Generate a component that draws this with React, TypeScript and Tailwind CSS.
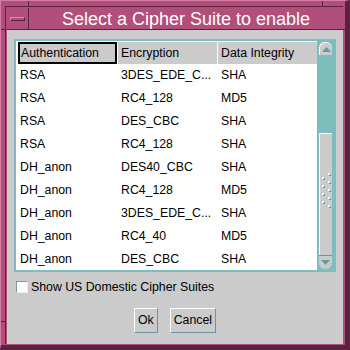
import React from "react";

const rows = [
  ["RSA", "3DES_EDE_C...", "SHA"],
  ["RSA", "RC4_128", "MD5"],
  ["RSA", "DES_CBC", "SHA"],
  ["RSA", "RC4_128", "SHA"],
  ["DH_anon", "DES40_CBC", "SHA"],
  ["DH_anon", "RC4_128", "MD5"],
  ["DH_anon", "3DES_EDE_C...", "SHA"],
  ["DH_anon", "RC4_40", "MD5"],
  ["DH_anon", "DES_CBC", "SHA"],
];

const font = { fontFamily: '"Liberation Sans", Arial, sans-serif' };

const Grip = () => (
  <svg width="9" height="36" viewBox="0 0 9 36">
    {[0, 8, 16, 24, 32].map((y) => (
      <g key={"r" + y}>
        <rect x="7" y={y + 1} width="2" height="2" fill="#5f9c9c" />
        <rect x="6" y={y} width="2" height="2" fill="#ffffff" />
      </g>
    ))}
    {[4, 12, 20, 28].map((y) => (
      <g key={"l" + y}>
        <rect x="1" y={y + 1} width="2" height="2" fill="#5f9c9c" />
        <rect x="0" y={y} width="2" height="2" fill="#ffffff" />
      </g>
    ))}
  </svg>
);

const Arrow = ({ up }: { up: boolean }) => (
  <svg width="9" height="5" viewBox="0 0 9 5">
    <polygon points={up ? "0,5 9,5 4.5,0" : "0,0 9,0 4.5,5"} fill="#5f9c9c" />
  </svg>
);

export default function App() {
  return (
    <div
      className="relative w-[350px] h-[350px] bg-[#b24e7a] border-t border-l border-[#cf7da2] border-r-[5px] border-b-[5px] border-r-[#5a2141] border-b-[#5a2141] pt-[5px] pl-[4px] pr-[2px] pb-[1px] flex"
      style={font}
    >
      {/* frame corner marks */}
      <div className="absolute left-[27px] top-0 w-px h-[5px] bg-[#5a2141]" />
      <div className="absolute right-[22px] top-0 w-px h-[5px] bg-[#5a2141]" />
      <div className="absolute left-0 top-[28px] w-[4px] h-px bg-[#5a2141]" />
      <div className="absolute right-0 top-[28px] w-[2px] h-px bg-[#5a2141]" />
      <div className="absolute left-0 bottom-[23px] w-[4px] h-px bg-[#5a2141]" />

      <div className="flex-1 flex flex-col border-t border-l border-[#5a2141] pt-px pl-px">
        {/* title bar */}
        <div className="flex h-[22px] border-b border-[#5a2141]">
          <div className="w-[22px] border-r border-[#5a2141] flex items-center justify-center">
            <div className="w-[15px] h-[4px] border-t border-l border-[#d88cad] border-b border-r border-b-[#5a2141] border-r-[#5a2141] bg-[#b24e7a]" />
          </div>
          <div className="flex-1 flex items-center justify-center text-white text-[18px] leading-none pt-px">
            Select a Cipher Suite to enable
          </div>
        </div>

        {/* body */}
        <div className="flex-1 bg-[#cbcbcb] flex flex-col px-[7px] pt-[9px] pb-[11px]">
          <div className="h-[233px] flex border-2 border-[#7dbdbb] bg-white">
            <div className="flex-1 flex flex-col overflow-hidden pl-[2px] pt-[1px]">
              <div className="flex h-[22px] text-[12.3px] text-black bg-[#cbcbcb]">
                <div className="w-[99px] border-2 border-black pl-[1px] flex items-center">Authentication</div>
                <div className="w-[100px] border-l border-white pl-[3px] flex items-center">Encryption</div>
                <div className="w-[98px] border-l border-white pl-[3px] flex items-center">Data Integrity</div>
              </div>
              {rows.map((r, i) => (
                <div key={i} className="flex h-[23px] shrink-0 items-center text-[12.3px] text-black pb-px">
                  <div className="w-[99px] pl-[2px]">{r[0]}</div>
                  <div className="w-[100px] pl-[4px]">{r[1]}</div>
                  <div className="w-[98px] pl-[4px]">{r[2]}</div>
                </div>
              ))}
            </div>
            <div className="w-[17px] bg-[#7dbdbb] flex flex-col px-[2px] pt-[1px] pb-[1px]">
              <div className="h-[13px] rounded-t-[6px] bg-[#cbcbcb] border-t border-l border-white flex items-center justify-center">
                <Arrow up />
              </div>
              <div className="flex-1" />
              <div className="h-[122px] bg-[#cbcbcb] border-t border-l border-white flex items-center justify-center pb-[7px]">
                <Grip />
              </div>
              <div className="h-[14px] rounded-b-[6px] bg-[#cbcbcb] border-t border-[#5f9c9c] flex items-center justify-center">
                <Arrow up={false} />
              </div>
            </div>
          </div>

          <div className="flex items-center mt-[9px] h-[12px]">
            <div className="w-[12px] h-[12px] bg-white border-t border-l border-[#7a9d9d] border-b border-r border-b-[#eeeeee] border-r-[#eeeeee] ml-[2px]" />
            <span className="ml-[3px] text-[12.3px] text-black">Show US Domestic Cipher Suites</span>
          </div>

          <div className="flex-1 flex items-end justify-center gap-[12px]">
            <button className="h-[25px] px-[3px] bg-[#cbcbcb] border-t border-l border-white border-b border-r border-b-[#6d9494] border-r-[#6d9494] text-[12.3px] text-black">
              Ok
            </button>
            <button className="h-[25px] px-[3px] bg-[#cbcbcb] border-t border-l border-white border-b border-r border-b-[#6d9494] border-r-[#6d9494] text-[12.3px] text-black">
              Cancel
            </button>
          </div>
        </div>
      </div>
    </div>
  );
}
